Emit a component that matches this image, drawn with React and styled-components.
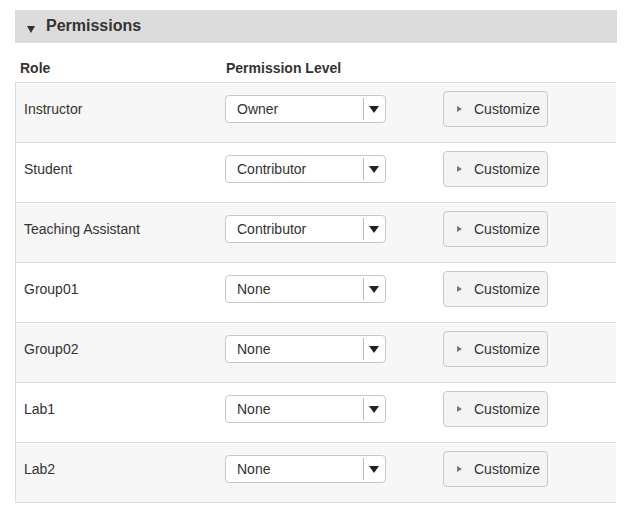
import React from 'react';
import styled, { createGlobalStyle } from 'styled-components';

const GlobalStyle = createGlobalStyle`
  body {
    margin: 0;
    background: #fff;
    font-family: "Liberation Sans", Arial, sans-serif;
    color: #333;
  }
`;

const roles = [
  { name: 'Instructor', level: 'Owner' },
  { name: 'Student', level: 'Contributor' },
  { name: 'Teaching Assistant', level: 'Contributor' },
  { name: 'Group01', level: 'None' },
  { name: 'Group02', level: 'None' },
  { name: 'Lab1', level: 'None' },
  { name: 'Lab2', level: 'None' },
];

export default function App() {
  return (
    <React.Fragment>
      <GlobalStyle />
      <Page>
        <SectionHeader>
          <Caret />
          <Title>Permissions</Title>
        </SectionHeader>
        <HeadRow>
          <HeadCell>Role</HeadCell>
          <HeadCell $indent={1}>Permission Level</HeadCell>
          <HeadCell />
        </HeadRow>
        <Table>
          {roles.map((r, i) => (
            <Row key={r.name} $shaded={i % 2 === 0}>
              <RoleName>{r.name}</RoleName>
              <div>
                <Select>
                  <SelectValue>{r.level}</SelectValue>
                  <SelectDivider />
                  <SelectArrow />
                </Select>
              </div>
              <div>
                <CustomizeButton type="button">
                  <PlayIcon />
                  Customize
                </CustomizeButton>
              </div>
            </Row>
          ))}
        </Table>
      </Page>
    </React.Fragment>
  );
}

const Page = styled.div`
  width: 602px;
  padding: 10px 0 0 15px;
`;

const SectionHeader = styled.div`
  display: flex;
  align-items: center;
  height: 33px;
  background: #dcdcdc;
  padding-left: 12px;
`;

const Caret = styled.span`
  width: 0;
  height: 0;
  border-left: 4.5px solid transparent;
  border-right: 4.5px solid transparent;
  border-top: 7px solid #333;
  margin-top: 5px;
  margin-right: 11px;
`;

const Title = styled.h2`
  margin: 0;
  font-size: 16px;
  font-weight: bold;
  color: #333;
  margin-top: -1px;
`;

const HeadRow = styled.div`
  display: grid;
  grid-template-columns: 210px 217px 1fr;
  align-items: center;
  margin-top: 10px;
  height: 29px;
`;

const HeadCell = styled.div`
  font-size: 14px;
  font-weight: bold;
  color: #333;
  padding-left: ${p => (p.$indent ? '1px' : '5px')};
`;

const Table = styled.div`
  border-left: 1px solid #ddd;
  border-bottom: 1px solid #ddd;
  margin-right: 1px;
`;

const Row = styled.div`
  display: grid;
  grid-template-columns: 209px 217px 1fr;
  align-items: center;
  border-top: 1px solid #ddd;
  background: ${p => (p.$shaded ? '#f7f7f7' : '#fff')};
  padding: 8px 0 15px;
  height: 36px;
`;

const RoleName = styled.div`
  font-size: 14px;
  color: #333;
  padding-left: 8px;
`;

const Select = styled.div`
  display: flex;
  align-items: center;
  box-sizing: border-box;
  width: 161px;
  height: 28px;
  border: 1px solid #c8c8c8;
  border-radius: 4px;
  background: #fff;
`;

const SelectValue = styled.span`
  flex: 1;
  font-size: 14px;
  color: #333;
  padding-left: 11px;
`;

const SelectDivider = styled.span`
  width: 1px;
  height: 22px;
  background: #bbb;
`;

const SelectArrow = styled.span`
  width: 0;
  height: 0;
  border-left: 5px solid transparent;
  border-right: 5px solid transparent;
  border-top: 7px solid #222;
  margin: 1px 6px 0 5px;
`;

const CustomizeButton = styled.button`
  display: flex;
  align-items: center;
  box-sizing: border-box;
  width: 105px;
  height: 36px;
  margin: 0 0 0 1px;
  padding: 0 0 0 13px;
  border: 1px solid #c8c8c8;
  border-radius: 4px;
  background: #f4f4f4;
  font-family: "Liberation Sans", Arial, sans-serif;
  font-size: 14px;
  color: #333;
  cursor: pointer;
`;

const PlayIcon = styled.span`
  width: 0;
  height: 0;
  border-top: 3.5px solid transparent;
  border-bottom: 3.5px solid transparent;
  border-left: 5px solid #777;
  margin-right: 12px;
`;
